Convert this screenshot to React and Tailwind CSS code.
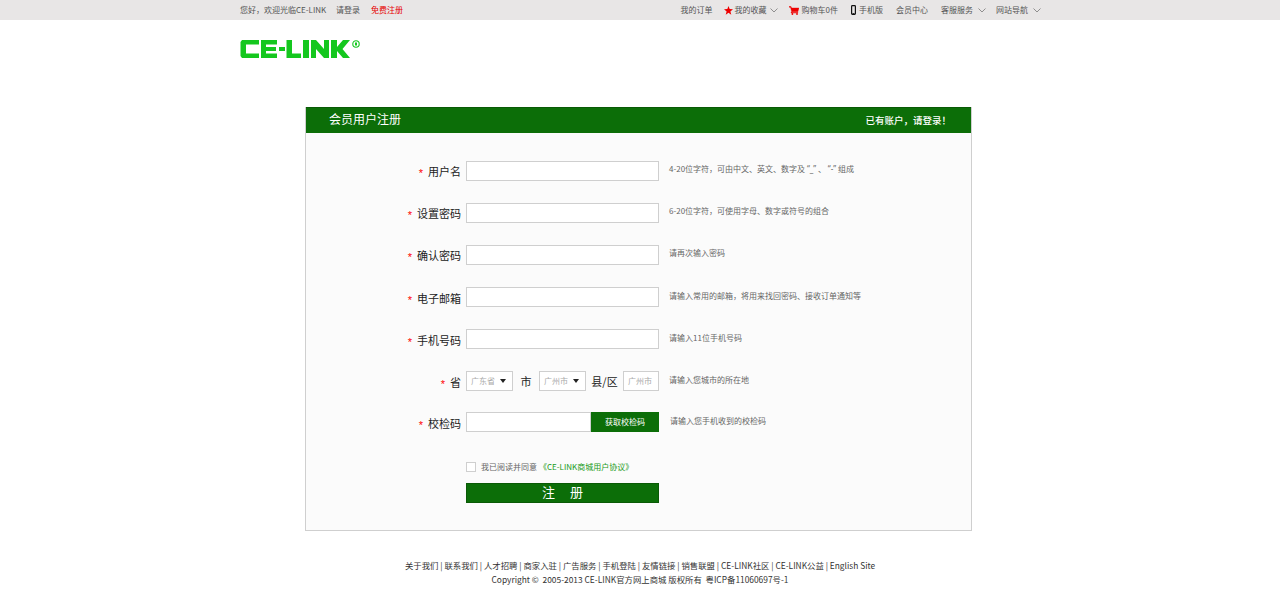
import React from "react";

const font = '"Noto Sans CJK SC","Noto Sans",sans-serif';

function Chevron({ className = "ml-[5px]" }) {
  return (
    <svg width="8" height="5" viewBox="0 0 8 5" className={`${className} mt-[1px]`}>
      <path d="M0.5 0.5 L4 4 L7.5 0.5" fill="none" stroke="#777" strokeWidth="0.8" />
    </svg>
  );
}

function Logo() {
  return (
    <svg width="121" height="21" viewBox="0 0 121 21" className="block">
      <g fill="#14c71e">
        <path d="M2 1H19V5.5H6V14.5H19V19H2L0.5 17V3Z" />
        <path d="M21 1H37V5.5H26V8H36V12H26V14.5H37V19H21Z" />
        <rect x="39" y="8" width="6" height="4" />
        <path d="M46.5 1H52V14.5H61V19H46.5Z" />
        <rect x="63" y="1" width="6" height="18" />
        <path d="M71 1H76L84 10V1H89V19H84L76 10V19H71Z" />
        <path d="M91 1H97V8L103 1H110L102.5 10L110 19H103L97 12V19H91Z" />
      </g>
      <circle cx="116" cy="5" r="3.2" fill="none" stroke="#14c71e" strokeWidth="1.1" />
      <rect x="115" y="3.5" width="2" height="3" fill="#14c71e" />
    </svg>
  );
}

function Row({ label, hint, className = "", hintClass = "ml-[10px]", low = false, children }) {
  return (
    <div className={`flex items-center h-5 ${className}`}>
      <div className={`w-[160px] shrink-0 flex justify-end items-center pr-[5px] text-[11px] text-[#222] ${low ? "mt-[2px]" : ""}`}>
        <span className="text-[#f00] text-[11px] mr-[5px] mt-[5px]" style={{ fontFamily: '"Liberation Sans",sans-serif' }}>*</span>
        <span>{label}</span>
      </div>
      {children || <div className="w-[193px] h-5 bg-white border border-[#cfcfcf]" />}
      <div className={`${hintClass} text-[8px] text-[#666] ${low ? "-mt-[2px]" : "-mt-[4px]"} whitespace-pre`}>{hint}</div>
    </div>
  );
}

function Sel({ w, text, arrow }) {
  return (
    <div className={`${w} h-5 bg-white border border-[#cfcfcf] flex items-center pl-[4px] text-[8px] text-[#aaa]`}>
      <span>{text}</span>
      {arrow && (
        <svg width="6" height="4" viewBox="0 0 6 4" className="ml-[5px] -mt-[1px]">
          <path d="M0 0H6L3 4Z" fill="#222" />
        </svg>
      )}
    </div>
  );
}

export default function App() {
  const latin = { fontFamily: '"Noto Sans",sans-serif' };
  return (
    <div className="min-h-[596px] bg-white overflow-hidden" style={{ fontFamily: font }}>
      <div className="h-5 bg-[#e8e6e6] text-[8px] text-[#555]">
        <div className="w-[801px] ml-[240px] h-5 flex items-center justify-between">
          <div className="flex items-center">
            <span className="w-[96px]">您好，欢迎光临CE-LINK</span>
            <span className="w-[35px]">请登录</span>
            <span className="text-[#e60000]">免费注册</span>
          </div>
          <div className="flex items-center">
            <span className="mr-[11px]">我的订单</span>
            <svg width="9" height="9" viewBox="0 0 10 10" className="mr-[2px]">
              <path d="M5 0L6.3 3.4L10 3.7L7.1 6L8.1 9.6L5 7.6L1.9 9.6L2.9 6L0 3.7L3.7 3.4Z" fill="#e00" />
            </svg>
            <span>我的收藏</span>
            <Chevron className="ml-[3px]" />
            <svg width="10" height="9" viewBox="0 0 10 9" className="ml-[11px] mr-[3px]">
              <path d="M0 0.5H2L2.6 2H10L8.8 5.8H3.4L2.8 6.6H9V7H2L2.6 5.4L1.5 1.2H0Z" fill="#e00" stroke="#e00" strokeWidth="0.4" />
              <circle cx="3.4" cy="8" r="0.9" fill="#e00" />
              <circle cx="8" cy="8" r="0.9" fill="#e00" />
            </svg>
            <span>购物车0件</span>
            <svg width="5" height="10" viewBox="0 0 5 10" className="ml-[13px] mr-[3px]">
              <rect x="0.6" y="0.6" width="3.8" height="8.8" rx="0.8" fill="none" stroke="#111" strokeWidth="1.2" />
              <rect x="1.5" y="8.2" width="2" height="1.4" fill="#111" />
            </svg>
            <span>手机版</span>
            <span className="ml-[13px]">会员中心</span>
            <span className="ml-[13px]">客服服务</span>
            <Chevron />
            <span className="ml-[10px]">网站导航</span>
            <Chevron />
          </div>
        </div>
      </div>

      <div className="ml-[240px] mt-[19px] h-[21px]">
        <Logo />
      </div>

      <div className="ml-[305px] mt-[47px] w-[667px] h-[424px] border border-[#cfcfcf] border-t-0 bg-[#fbfbfb]">
        <div className="h-[26px] bg-[#0c6e08] border-t border-[#0a5a06] flex items-center justify-between pl-[23px] pr-[20px] text-white">
          <span className="text-[12px] -mt-[3px]">会员用户注册</span>
          <span className="text-[9.5px] font-medium">已有账户，请登录！</span>
        </div>
        <div className="pt-[28px] flex flex-col">
          <Row
            label="用户名"
            hint={
              <>
                4-20位字符，可由中文、英文、数字及 <span style={latin}>“_”</span> 、 <span style={latin}>“-”</span> 组成
              </>
            }
          />
          <Row className="mt-[22px]" label="设置密码" hint="6-20位字符，可使用字母、数字或符号的组合" />
          <Row className="mt-[22px]" label="确认密码" hint="请再次输入密码" />
          <Row className="mt-[22px]" low label="电子邮箱" hint="请输入常用的邮箱，将用来找回密码、接收订单通知等" />
          <Row className="mt-[22px]" low label="手机号码" hint="请输入11位手机号码" />
          <Row className="mt-[22px]" low label="省" hint="请输入您城市的所在地">
            <div className="w-[193px] flex items-center text-[11px] text-[#222]">
              <Sel w="w-[47px]" text="广东省" arrow />
              <span className="w-[26px] text-center">市</span>
              <Sel w="w-[47px]" text="广州市" arrow />
              <span className="w-[37px] text-center">县/区</span>
              <Sel w="w-[36px]" text="广州市" />
            </div>
          </Row>
          <Row className="mt-[21px]" low label="校检码" hint="请输入您手机收到的校检码" hintClass="ml-[11px]">
            <div className="w-[193px] flex items-center">
              <div className="w-[125px] h-5 bg-white border border-[#cfcfcf]" />
              <div className="w-[68px] h-5 bg-[#0c6e08] text-white text-[8px] flex items-center justify-center">获取校检码</div>
            </div>
          </Row>
          <div className="ml-[160px] mt-[29px] h-[11px] flex items-center text-[8px] text-[#666]">
            <div className="w-[10px] h-[10px] bg-white border border-[#cfcfcf] mr-[5px]" />
            <span>我已阅读并同意</span>
            <span className="text-[#1a9a1a] ml-[2px]">《CE-LINK商城用户协议》</span>
          </div>
          <div className="ml-[160px] mt-[11px] w-[193px] h-5 bg-[#0c6e08] border border-[#0a5a06] text-white text-[13px] flex items-center justify-center gap-[15px] pb-[2px]">
            <span>注</span>
            <span>册</span>
          </div>
        </div>
      </div>

      <div className="mt-[27px] text-center text-[8.4px] leading-[14px] text-[#333] whitespace-pre">
        <div>关于我们 | 联系我们 | 人才招聘 | 商家入驻 | 广告服务 | 手机登陆 | 友情链接 | 销售联盟 | CE-LINK社区 | CE-LINK公益 | English Site</div>
        <div>Copyright ©  2005-2013 CE-LINK官方网上商城 版权所有  粤ICP备11060697号-1</div>
      </div>
    </div>
  );
}
